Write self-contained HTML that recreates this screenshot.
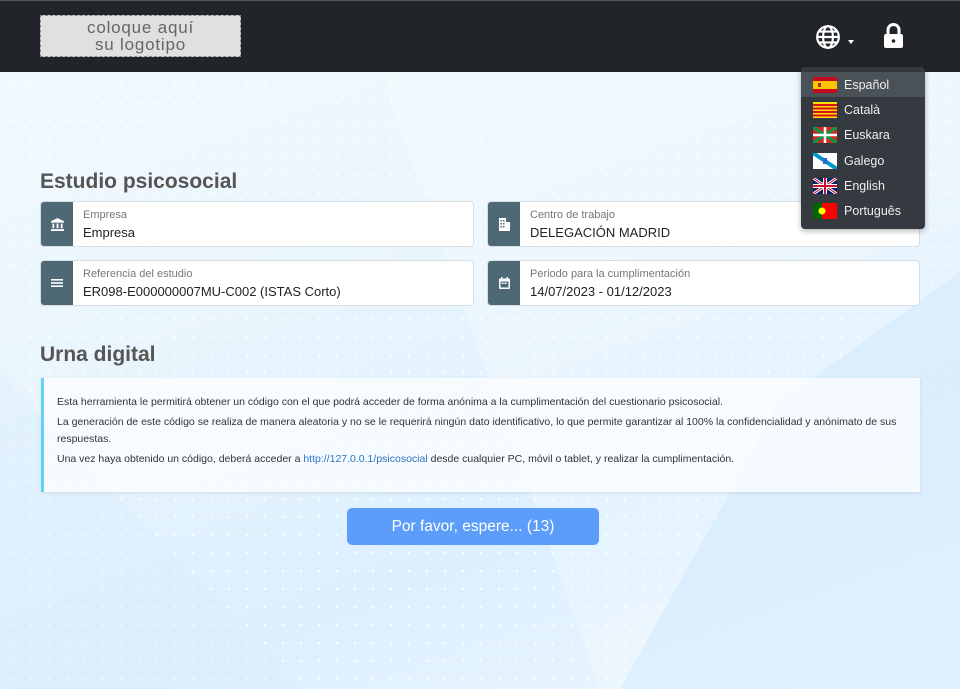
<!DOCTYPE html>
<html><head><meta charset="utf-8"><style>
*{box-sizing:border-box;margin:0;padding:0}
body{width:960px;height:689px;overflow:hidden;font-family:"Liberation Sans",sans-serif;position:relative;
background:linear-gradient(160deg,#f4faff 0%,#e9f5fd 40%,#dcefff 70%,#eef7fe 100%);}
.dots{position:absolute;left:0;top:72px;width:960px;height:617px;
background-image:radial-gradient(circle,rgba(255,255,255,.9) 1.3px,transparent 1.6px);background-size:18px 18px;background-position:4px 4px;opacity:.8}
.shape{position:absolute;}
header{position:absolute;left:0;top:0;width:960px;height:72px;background:#212529;border-top:1px solid #555}
.logo{position:absolute;left:40px;top:14px;width:201px;height:42px;background:#e0e0e0;border:1px dashed #888;color:#666;text-align:center;font-size:17px;line-height:17px;padding-top:3px;letter-spacing:.8px}
h2{position:absolute;left:40px;font-size:21px;font-weight:bold;color:#555;font-family:"Liberation Sans",sans-serif}
.f{position:absolute;height:46px;background:#fff;border:1px solid #d6dde3;border-radius:4px;overflow:hidden}
.f .ic{position:absolute;left:0;top:0;width:32px;height:100%;background:#4f6875;color:#fff;display:flex;align-items:center;justify-content:center}
.f .l{position:absolute;left:42px;top:7px;font-size:11px;color:#777}
.f .v{position:absolute;left:42px;top:23px;font-size:13px;color:#222}
.info{position:absolute;left:41px;top:378px;width:879px;height:114px;background:rgba(255,255,255,.7);border-left:3px solid #64d2f2;box-shadow:0 1px 3px rgba(0,0,0,.1);padding:16px 13px;font-size:10.5px;color:#333;line-height:17px}
.info p{margin-bottom:3px}
.info a{color:#2a75c8;text-decoration:none}
.btn{position:absolute;left:347px;top:508px;width:252px;height:37px;background:#5b9df8;border-radius:5px;color:#fff;font-size:15.5px;text-align:center;line-height:37px}
.dd{position:absolute;z-index:10;left:801px;top:67px;width:124px;height:162px;background:#343a40;border-radius:4px;padding-top:5px;box-shadow:0 2px 6px rgba(0,0,0,.3)}
.it{height:25.3px;display:flex;align-items:center;color:#eee;font-size:12.5px;padding-left:12px}
.it.a{background:#4a5157}
.fl{width:24px;height:16px;margin-right:7px;flex:none}
</style></head><body>
<div class="dots"></div>
<svg class="shape" style="left:0;top:72px" width="960" height="617">
<polygon points="380,0 960,0 960,617 600,617" fill="#ffffff" opacity=".25"/>
<polygon points="780,330 960,200 960,617 620,617" fill="#cfe8fb" opacity=".5"/>
<polygon points="0,300 300,617 0,617" fill="#d9edfc" opacity=".4"/>
</svg>
<header>
<div class="logo">coloque aquí<br>su logotipo</div>
<svg style="position:absolute;left:814px;top:23px" width="28" height="26" viewBox="0 0 24 24" fill="none" stroke="#fff" stroke-width="2"><circle cx="12" cy="12" r="10"/><ellipse cx="12" cy="12" rx="4.5" ry="10"/><line x1="2" y1="12" x2="22" y2="12"/><line x1="4" y1="7" x2="20" y2="7"/><line x1="4" y1="17" x2="20" y2="17"/></svg>
<div style="position:absolute;left:848px;top:39px;border:3px solid transparent;border-top:4px solid #fff"></div>
<svg style="position:absolute;left:883px;top:22px" width="21" height="26" viewBox="0 0 21 26"><path d="M5 11V7a5.5 5.5 0 0 1 11 0v4" fill="none" stroke="#fff" stroke-width="3"/><rect x="1" y="11" width="19" height="14" rx="2" fill="#fff"/><circle cx="10.5" cy="18" r="1.8" fill="#212529"/></svg>
</header>
<div class="dd">
<div class="it a"><svg class="fl" viewBox="0 0 24 16"><rect width="24" height="16" fill="#c60b1e"/><rect y="4" width="24" height="8" fill="#ffc400"/><rect x="5" y="6" width="3" height="4" fill="#a33"/></svg>Español</div>
<div class="it"><svg class="fl" viewBox="0 0 24 16"><rect width="24" height="16" fill="#fcdd09"/><g fill="#da121a"><rect y="2" width="24" height="2"/><rect y="5.5" width="24" height="2"/><rect y="9" width="24" height="2"/><rect y="12.5" width="24" height="2"/></g></svg>Català</div>
<div class="it"><svg class="fl" viewBox="0 0 24 16"><rect width="24" height="16" fill="#d52b1e"/><path d="M0 0L24 16M24 0L0 16" stroke="#009b48" stroke-width="3"/><path d="M12 0V16M0 8H24" stroke="#fff" stroke-width="2.5"/></svg>Euskara</div>
<div class="it"><svg class="fl" viewBox="0 0 24 16"><rect width="24" height="16" fill="#fff"/><path d="M0 0L24 16" stroke="#0099cc" stroke-width="4"/><rect x="10" y="5" width="4" height="6" fill="#36c"/></svg>Galego</div>
<div class="it"><svg class="fl" viewBox="0 0 24 16"><rect width="24" height="16" fill="#012169"/><path d="M0 0L24 16M24 0L0 16" stroke="#fff" stroke-width="3"/><path d="M0 0L24 16M24 0L0 16" stroke="#c8102e" stroke-width="1"/><path d="M12 0V16M0 8H24" stroke="#fff" stroke-width="4"/><path d="M12 0V16M0 8H24" stroke="#c8102e" stroke-width="2"/></svg>English</div>
<div class="it"><svg class="fl" viewBox="0 0 24 16"><rect width="24" height="16" fill="#f00"/><rect width="9" height="16" fill="#060"/><circle cx="9" cy="8" r="3.5" fill="#ff0"/></svg>Português</div>
</div>
<h2 style="top:170px">Estudio psicosocial</h2>
<div class="f" style="left:40px;top:201px;width:434px"><div class="ic"><svg width="13" height="13" viewBox="0 0 14 14" fill="#fff"><path d="M7 0L14 3.5V5H0V3.5Z"/><rect x="1.5" y="6" width="2" height="5"/><rect x="6" y="6" width="2" height="5"/><rect x="10.5" y="6" width="2" height="5"/><rect x="0" y="12" width="14" height="2"/></svg></div><div class="l">Empresa</div><div class="v">Empresa</div></div>
<div class="f" style="left:487px;top:201px;width:433px"><div class="ic"><svg width="11" height="13" viewBox="0 0 11 13" fill="#fff"><path d="M0 0h7v13H0zM7 4h4v9H7z"/><g fill="#4f6875"><rect x="1.5" y="2" width="1.5" height="1.5"/><rect x="4" y="2" width="1.5" height="1.5"/><rect x="1.5" y="5" width="1.5" height="1.5"/><rect x="4" y="5" width="1.5" height="1.5"/><rect x="1.5" y="8" width="1.5" height="1.5"/><rect x="4" y="8" width="1.5" height="1.5"/></g></svg></div><div class="l">Centro de trabajo</div><div class="v">DELEGACIÓN MADRID</div></div>
<div class="f" style="left:40px;top:260px;width:434px"><div class="ic"><svg width="12" height="10" viewBox="0 0 12 10" fill="#fff"><rect y="1" width="12" height="1.6"/><rect y="4.2" width="12" height="1.6"/><rect y="7.4" width="12" height="1.6"/></svg></div><div class="l">Referencia del estudio</div><div class="v">ER098-E000000007MU-C002 (ISTAS Corto)</div></div>
<div class="f" style="left:487px;top:260px;width:433px"><div class="ic"><svg width="11" height="12" viewBox="0 0 11 12" fill="#fff"><rect x="2" y="0" width="1.5" height="3"/><rect x="7.5" y="0" width="1.5" height="3"/><rect x="0" y="1.5" width="11" height="10.5" rx="1"/><rect x="1.5" y="4.5" width="8" height="6" fill="#4f6875"/><rect x="2.5" y="5.5" width="2" height="1.5"/><rect x="5.5" y="5.5" width="2" height="1.5"/></svg></div><div class="l">Periodo para la cumplimentación</div><div class="v">14/07/2023 - 01/12/2023</div></div>
<h2 style="top:343px">Urna digital</h2>
<div class="info">
<p>Esta herramienta le permitirá obtener un código con el que podrá acceder de forma anónima a la cumplimentación del cuestionario psicosocial.</p>
<p>La generación de este código se realiza de manera aleatoria y no se le requerirá ningún dato identificativo, lo que permite garantizar al 100% la confidencialidad y anónimato de sus respuestas.</p>
<p>Una vez haya obtenido un código, deberá acceder a <a>http://127.0.0.1/psicosocial</a> desde cualquier PC, móvil o tablet, y realizar la cumplimentación.</p>
</div>
<div class="btn">Por favor, espere... (13)</div>
</body></html>
